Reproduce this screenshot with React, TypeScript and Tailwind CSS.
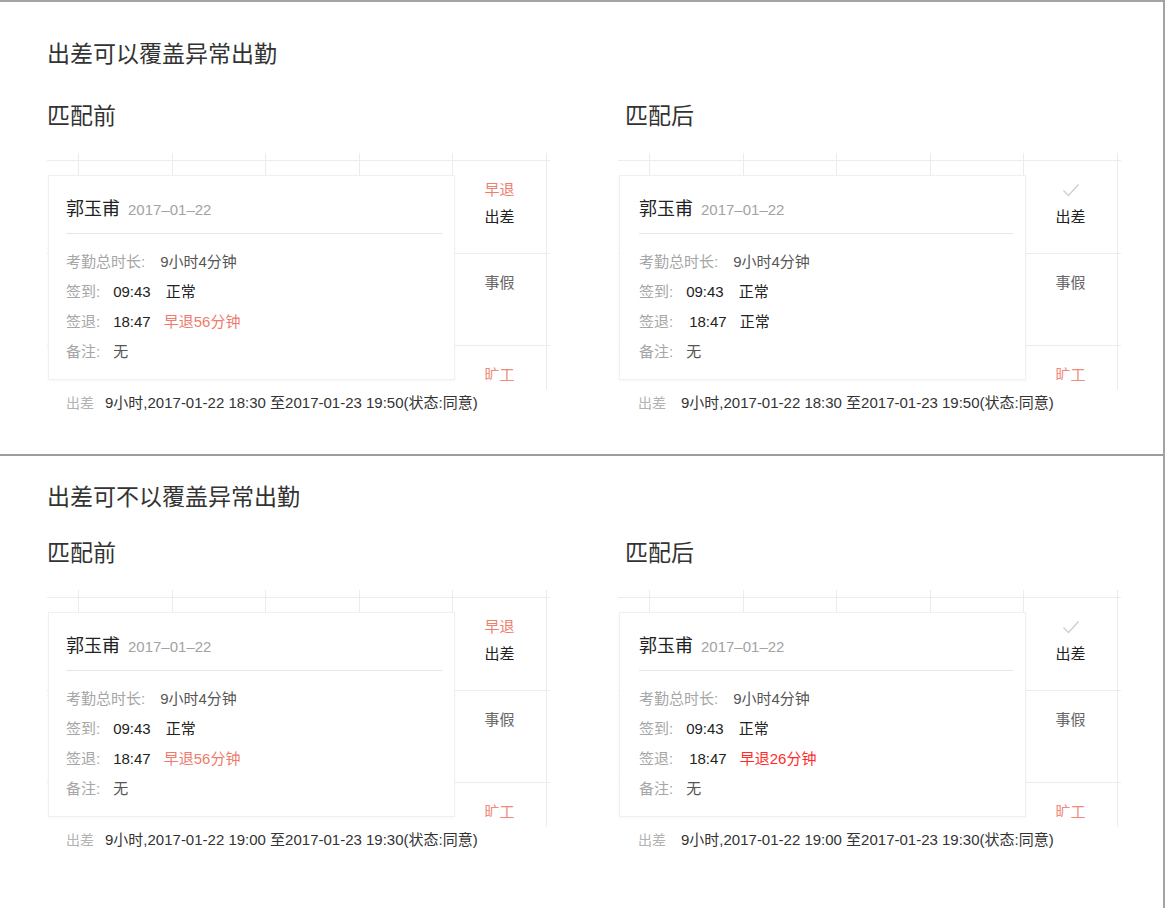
import React from 'react';

const font = "font-['Liberation_Sans','Noto_Sans_CJK_SC',sans-serif]";

const colW = ['w-[32px]', 'w-[94px]', 'w-[93px]', 'w-[94px]', 'w-[93px]', 'w-[94px]', 'w-[3px]'];

function GridRow({ className, children }: { className: string; children?: React.ReactNode }) {
  return (
    <div className={`flex ${className}`}>
      {colW.map((w, i) => (
        <div
          key={i}
          className={`${w} shrink-0 h-full ${i < 6 ? 'border-r border-[#ececec]' : ''}`}
        >
          {i === 5 ? children : null}
        </div>
      ))}
    </div>
  );
}

function CheckMark() {
  return (
    <svg width="18" height="20" viewBox="0 0 18 20" className="block">
      <polyline points="1.5,10.5 6.5,15.5 16.5,4.5" fill="none" stroke="#cfcfcf" strokeWidth="1.4" />
    </svg>
  );
}

interface Snippet {
  after: boolean;
  leaveText: string;
  leaveColor: string;
  trip: string;
}

function Calendar({ s }: { s: Snippet }) {
  return (
    <div className={`${s.after ? '-ml-[7px]' : ''}`}>
      <div className="relative w-[503px]">
        <div className="flex flex-col">
          <GridRow className="h-[8px] border-b border-[#ececec]" />
          <GridRow className="h-[93px] border-b border-[#ececec]">
            <div className="flex flex-col items-center pt-[19px] gap-[7px] text-[15px] leading-[20px]">
              {s.after ? <CheckMark /> : <span className="text-[#f07e6e]">早退</span>}
              <span className="text-[#222]">出差</span>
            </div>
          </GridRow>
          <GridRow className="h-[92px] border-b border-[#ececec]">
            <div className="flex flex-col items-center pt-[19px] text-[15px] leading-[20px] text-[#666]">
              事假
            </div>
          </GridRow>
          <GridRow className="h-[44px]">
            <div className="flex flex-col items-center pt-[19px] text-[15px] leading-[20px] text-[#f08a7c]">
              旷工
            </div>
          </GridRow>
        </div>

        {/* popover card */}
        <div className="absolute left-0 top-[227px] w-[452px] h-[10px] bg-white" />
        <div className="absolute left-[1px] top-[22px] w-[407px] h-[205px] bg-white border border-[#f0f0f0] shadow-[0_1px_3px_rgba(0,0,0,0.04)]">
          <div className={`${s.after ? 'pl-[19px]' : 'pl-[17px]'} pr-[12px]`}>
            <div className="flex items-baseline pt-[21px] pb-[11px] border-b border-[#e6e6e6]">
              <span className="text-[18px] leading-[24px] text-[#222]">郭玉甫</span>
              <span className="ml-[8px] text-[15px] leading-[24px] text-[#a3a3a3]">2017–01–22</span>
            </div>
            <div className="pt-[13px] text-[15px] leading-[30px]">
              <div className="flex">
                <span className="text-[#a6a6a6]">考勤总时长:</span>
                <span className="ml-[15px] text-[#555]">9小时4分钟</span>
              </div>
              <div className="flex">
                <span className="text-[#a6a6a6]">签到:</span>
                <span className="ml-[13px] text-[#222]">09:43</span>
                <span className="ml-[15px] text-[#222]">正常</span>
              </div>
              <div className="flex">
                <span className="text-[#a6a6a6]">签退:</span>
                <span className={`${s.after ? 'ml-[16px]' : 'ml-[13px]'} text-[#222]`}>18:47</span>
                <span className={`ml-[13px] ${s.leaveColor}`}>{s.leaveText}</span>
              </div>
              <div className="flex">
                <span className="text-[#a6a6a6]">备注:</span>
                <span className="ml-[13px] text-[#555]">无</span>
              </div>
            </div>
          </div>
        </div>
      </div>

      <div className={`flex items-center h-[20px] mt-[3px] text-[15px] ${s.after ? 'pl-[20px]' : 'pl-[19px]'}`}>
        <span className="text-[14px] text-[#b3b3b3]">出差</span>
        <span className={`${s.after ? 'ml-[15px]' : 'ml-[11px]'} text-[#333]`}>{s.trip}</span>
      </div>
    </div>
  );
}

interface Section {
  title: string;
  before: Snippet;
  after: Snippet;
}

const sections: Section[] = [
  {
    title: '出差可以覆盖异常出勤',
    before: {
      after: false,
      leaveText: '早退56分钟',
      leaveColor: 'text-[#f07a6b]',
      trip: '9小时,2017-01-22 18:30 至2017-01-23 19:50(状态:同意)',
    },
    after: {
      after: true,
      leaveText: '正常',
      leaveColor: 'text-[#222]',
      trip: '9小时,2017-01-22 18:30 至2017-01-23 19:50(状态:同意)',
    },
  },
  {
    title: '出差可不以覆盖异常出勤',
    before: {
      after: false,
      leaveText: '早退56分钟',
      leaveColor: 'text-[#f07a6b]',
      trip: '9小时,2017-01-22 19:00 至2017-01-23 19:30(状态:同意)',
    },
    after: {
      after: true,
      leaveText: '早退26分钟',
      leaveColor: 'text-[#ff2b2b]',
      trip: '9小时,2017-01-22 19:00 至2017-01-23 19:30(状态:同意)',
    },
  },
];

export default function App() {
  return (
    <div className={`w-[1165px] h-[908px] bg-white border-t-2 border-r-2 border-[#a3a3a3] ${font}`}>
      {sections.map((sec, i) => (
        <section
          key={i}
          className={`px-[47px] ${
            i === 0 ? 'h-[454px] pt-[36px] border-b-2 border-[#9c9c9c]' : 'pt-[25px]'
          }`}
        >
          <h1 className="text-[23px] leading-[32px] text-[#333]">{sec.title}</h1>
          <div className={`grid grid-cols-[578px_1fr] ${i === 0 ? 'mt-[30px]' : 'mt-[24px]'}`}>
            <div>
              <h2 className="text-[23px] leading-[32px] text-[#333]">匹配前</h2>
              <div className="mt-[21px]">
                <Calendar s={sec.before} />
              </div>
            </div>
            <div>
              <h2 className="text-[23px] leading-[32px] text-[#333]">匹配后</h2>
              <div className="mt-[21px]">
                <Calendar s={sec.after} />
              </div>
            </div>
          </div>
        </section>
      ))}
    </div>
  );
}
